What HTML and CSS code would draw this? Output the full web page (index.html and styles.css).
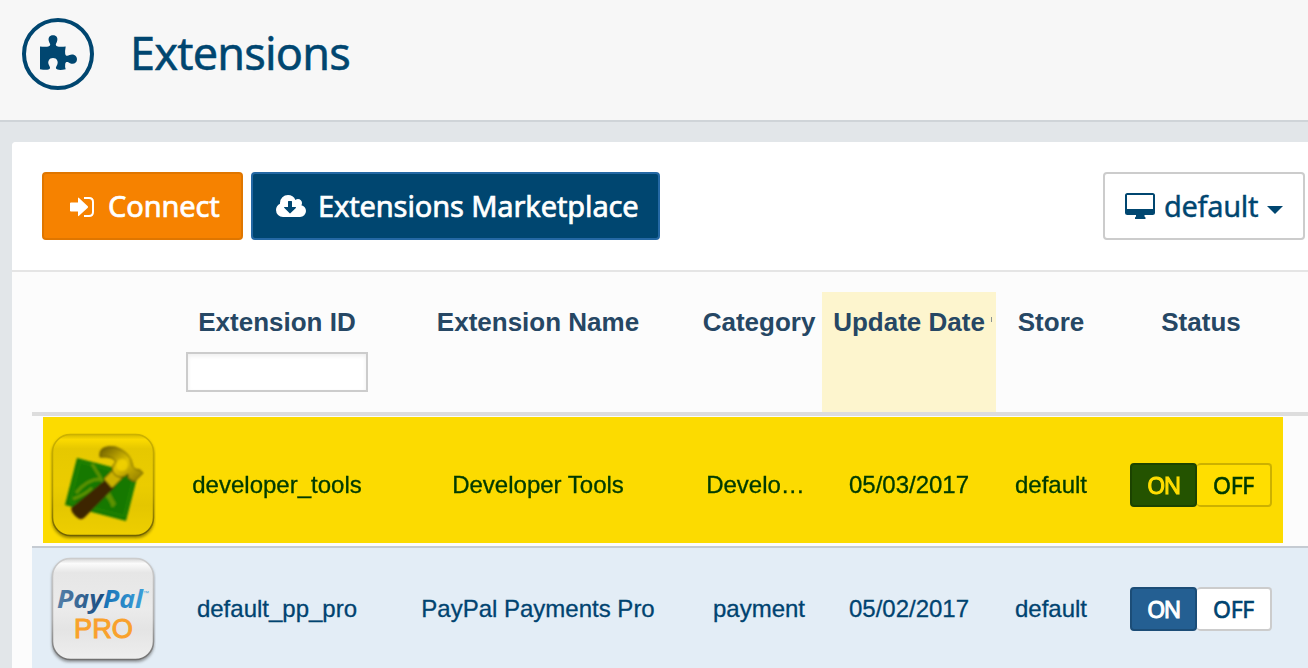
FILE: index.html
```html
<!DOCTYPE html>
<html lang="en">
<head>
<meta charset="utf-8">
<title>Extensions</title>
<link rel="stylesheet" href="styles.css">
</head>
<body>
<header class="page-header">
  <div class="page-icon">
    <svg width="38" height="36" viewBox="0 0 38 36"><path fill="currentColor" d="M0 11.500Q6 12.300 9 11.300C11.500 10.200 9.500 8.500 9 6.500C7.700 3 9.500 .3 13 .3S18.300 3 17 6.500C16.300 8.500 14.800 10.200 17 11.300Q20 12.300 25.700 11.500Q24.800 16 25.200 19C25.800 21.500 28 21 29.500 20C33 18.300 37 20.500 37 24.200S33.500 30 30 28.200C27.500 26.800 25.800 26.200 25.200 29Q24.800 31.500 25.700 34.300Q20 35.500 17.500 34.500C14.500 33.500 16.500 31.500 17.300 29.500C18.500 26.500 17 23 13 23S7.500 26.500 8.700 29.500C9.500 31.500 11.500 33.500 8.500 34.500Q6 35.300 0 34.300Z"/></svg>
  </div>
  <h1 class="page-title">Extensions</h1>
</header>
<main class="panel">
  <div class="toolbar">
    <a class="btn btn-connect">
      <svg class="ico-login" width="26" height="22" viewBox="0 0 26 22"><path fill="currentColor" d="M1 6.500H8V2.300Q8 1 9 2L17.800 10.300Q18.300 11 17.800 11.700L9 19.800Q8 20.700 8 19.500V15.500H1Q0 15.500 0 14.800V7.200Q0 6.500 1 6.500Z"/><path fill="none" stroke="currentColor" stroke-width="2" d="M14 2H19Q23 2 23 6V16Q23 20 19 20H14"/></svg>
      <span class="connect-text">Connect</span>
    </a>
    <a class="btn btn-market">
      <svg class="ico-cloud" width="30" height="22" viewBox="0 128 1920 1408"><path fill="currentColor" d="M1280 928q0-14-9-23t-23-9h-224v-352q0-13-9.500-22.500t-22.500-9.500h-192q-13 0-22.500 9.500t-9.500 22.500v352h-224q-13 0-22.500 9.500t-9.500 22.500q0 14 9 23l352 352q9 9 23 9t23-9l351-351q10-12 10-24zm640 224q0 159-112.500 271.500t-271.500 112.500h-1088q-185 0-316.500-131.500t-131.500-316.500q0-130 70-240t188-165q-2-30-2-43 0-212 150-362t362-150q156 0 285.500 87t188.500 231q71-62 166-62 106 0 181 75t75 181q0 76-41 138 130 31 213.500 135.500t83.500 238.500z"/></svg>
      <span class="market-text">Extensions Marketplace</span>
    </a>
    <a class="btn btn-store">
      <svg width="30" height="26" viewBox="0 0 30 26"><path fill="currentColor" fill-rule="evenodd" d="M2.500 0H27.500Q30 0 30 2.500V19.500Q30 22 27.500 22H19.500V23.500L20.500 24.500V26H10V24.500L11 23.500V22H2.500Q0 22 0 19.500V2.500Q0 0 2.500 0ZM2 2V16H28V2Z"/></svg>
      <span class="store-text">default</span>
      <i class="caret"></i>
    </a>
  </div>
  <div class="grid">
    <div class="row head">
      <div></div>
      <div class="cell"><span class="label">Extension ID</span><input class="filter" type="text" aria-label="Extension ID"></div>
      <div class="cell"><span class="label">Extension Name</span></div>
      <div class="cell"><span class="label">Category</span></div>
      <div class="cell sorted"><span class="label">Update Date</span><i class="sort-mark"></i></div>
      <div class="cell"><span class="label">Store</span></div>
      <div class="cell"><span class="label">Status</span></div>
    </div>
    <div class="row item picked">
      <div class="thumb">
        <svg width="110" height="114" viewBox="0 0 110 114">
          <defs>
            <linearGradient id="tile" x1="0" y1="0" x2="0" y2="1"><stop offset="0" stop-color="#d6d6d6"/><stop offset=".05" stop-color="#fbfbfb"/><stop offset=".14" stop-color="#e6e6e6"/><stop offset=".5" stop-color="#ebebeb"/><stop offset=".7" stop-color="#e4e4e4"/><stop offset="1" stop-color="#eee"/></linearGradient>
            <linearGradient id="edge" x1="0" y1="0" x2="0" y2="1"><stop offset="0" stop-color="#ccc"/><stop offset=".6" stop-color="#b0b0b0"/><stop offset="1" stop-color="#707070"/></linearGradient>
            <linearGradient id="steel" x1="0" y1="0" x2="1" y2="1"><stop offset="0" stop-color="#666"/><stop offset=".5" stop-color="#ddd"/><stop offset="1" stop-color="#888"/></linearGradient>
            <filter id="soft" x="-10%" y="-10%" width="120%" height="120%"><feGaussianBlur stdDeviation="1.500"/></filter>
            <filter id="smooth" x="-5%" y="-5%" width="110%" height="110%"><feGaussianBlur stdDeviation=".8"/></filter>
          </defs>
          <rect x="6" y="8" width="102" height="102" rx="18" fill="#555" opacity=".6" filter="url(#soft)"/>
          <rect x="6.500" y="6.500" width="101" height="101" rx="18" fill="url(#tile)" stroke="url(#edge)" stroke-width="1.500"/>
          <g filter="url(#smooth)">
          <path d="M31 30L92 46L80 93L19 77Z" fill="#148a4c"/>
          <path d="M34 34L88 48L78 88L24 74Z" fill="none" stroke="#26995b" stroke-width="1.500"/>
          <path d="M46 36Q54 48 60 60T69 77M30 65Q42 50 56 51M27 71Q40 66 46 60M60 67Q65 71 67 79" fill="none" stroke="#6fb080" stroke-width="3" opacity=".8"/>
          <path d="M60 51L69 59L38 90Q33 94 26 84L25 80Z" fill="#3c2c20"/>
          <path d="M58 51L70 39L79 47L66 60Z" fill="#ccc" stroke="#666"/>
          <path d="M54 29Q52 17 69 19Q84 24 86 36Q87 42 94 42L97 45L88 54L82 50V46Q75 52 69 47Q63 40 70 34Q68 28 54 29Z" fill="url(#steel)" stroke="#555" stroke-width="1"/>
          <circle cx="76" cy="37" r="6" fill="#f2f2f2" opacity=".8"/>
          </g>
        </svg>
      </div>
      <div class="cell">developer_tools</div>
      <div class="cell">Developer Tools</div>
      <div class="cell cat">Develo…</div>
      <div class="cell">05/03/2017</div>
      <div class="cell">default</div>
      <div class="cell"><div class="switch"><span class="on">ON</span><span class="off">OFF</span></div></div>
    </div>
    <div class="row item alt">
      <div class="thumb">
        <svg width="110" height="114" viewBox="0 0 110 114">
          <defs>
            <linearGradient id="pay" x1="0" x2="1"><stop offset="0" stop-color="#5680a8"/><stop offset="1" stop-color="#174b80"/></linearGradient>
            <linearGradient id="pal" x1="0" x2="1"><stop offset="0" stop-color="#1771b5"/><stop offset="1" stop-color="#3c9fd9"/></linearGradient>
          </defs>
          <rect x="6" y="8" width="102" height="102" rx="18" fill="#555" opacity=".6" filter="url(#soft)"/>
          <rect x="6.500" y="6.500" width="101" height="101" rx="18" fill="url(#tile)" stroke="url(#edge)" stroke-width="1.500"/>
          <text class="logo-name" x="11" y="56" fill="url(#pay)" textLength="46" lengthAdjust="spacingAndGlyphs">Pay</text>
          <text class="logo-name" x="57" y="56" fill="url(#pal)" textLength="40" lengthAdjust="spacingAndGlyphs">Pal</text>
          <text class="logo-tm" x="97" y="43">™</text>
          <text class="logo-pro" x="28" y="86" textLength="59" lengthAdjust="spacingAndGlyphs">PRO</text>
        </svg>
      </div>
      <div class="cell">default_pp_pro</div>
      <div class="cell">PayPal Payments Pro</div>
      <div class="cell">payment</div>
      <div class="cell">05/02/2017</div>
      <div class="cell">default</div>
      <div class="cell"><div class="switch"><span class="on">ON</span><span class="off">OFF</span></div></div>
    </div>
  </div>
</main>
</body>
</html>
```
FILE: styles.css
```css
* { box-sizing: border-box; }
body { margin: 0; width: 1308px; height: 668px; overflow: hidden; background: #e2e6e9; color: #004370; font-family: "Liberation Sans", Arial, sans-serif; }
svg { display: block; flex: none; }
.page-header { height: 122px; padding: 18px 22px; display: flex; gap: 36px; background: #f7f7f7; border-bottom: 2px solid #cfd4d8; }
.page-icon { width: 72px; height: 72px; border: 4px solid #004670; border-radius: 50%; padding: 13px 0 0 14px; color: #004670; }
.page-title { margin: 0; font: 400 45px/70px "Noto Sans", sans-serif; letter-spacing: -.8px; color: #004670; -webkit-text-stroke: .5px; }
.panel { margin: 20px 0 0 12px; background: #fcfcfc; border-top-left-radius: 4px; overflow: hidden; }
.toolbar { height: 130px; padding: 30px 3px 0 30px; display: flex; gap: 8px; background: #fff; border-bottom: 2px solid #e5e5e5; }
.btn { height: 68px; display: flex; align-items: center; border: 2px solid; border-radius: 4px; white-space: nowrap; font: 400 29px/64px "Noto Sans", sans-serif; }
.btn-connect { width: 201px; padding-left: 26px; gap: 12px; background: #f68200; border-color: #df7600; color: #fff; }
.ico-login { margin-top: 2px; }
.btn-market { width: 409px; padding-left: 23px; gap: 12px; background: #004670; border-color: #2468a4; color: #fff; }
.connect-text, .market-text { letter-spacing: -.12px; -webkit-text-stroke: .7px; }
.btn-store { width: 202px; margin-left: auto; padding-left: 20px; gap: 9px; background: #fff; border-color: #ccc; color: #004670; }
.store-text { letter-spacing: -.3px; -webkit-text-stroke: .4px; }
.caret { border: 8px solid transparent; border-top-color: #004670; border-bottom: 0; margin-top: 7px; }
.grid { margin-left: 20px; padding-top: 20px; }
.row { display: grid; grid-template-columns: 142px 206px 316px 126px 174px 110px 190px; }
.cell { display: flex; justify-content: center; align-items: center; white-space: nowrap; }
.head { height: 124px; border-bottom: 4px solid #ddd; color: #264764; font-weight: 700; font-size: 26px; }
.head .cell { flex-direction: column; justify-content: flex-start; }
.label { line-height: 60px; }
.filter { width: 182px; height: 40px; border: 2px solid #ccc; background: #fff; box-shadow: inset 0 2px 4px #0001; }
.sorted { position: relative; background: #fdf5ce; }
.sort-mark { position: absolute; left: 169px; top: 25px; width: 1px; height: 5px; background: #8a9290; }
.item { font-size: 24px; -webkit-text-stroke: .3px; }
.item svg { -webkit-text-stroke: 0; }
.picked { position: relative; isolation: isolate; height: 130px; background: #fcfcfc; }
.picked::after { content: ""; position: absolute; left: 11px; top: 1px; width: 1240px; height: 126px; background: #ffde00; mix-blend-mode: multiply; }
.picked .cell { height: 138px; }
.alt { height: 124px; background: #e3edf6; border-top: 2px solid #c5cbd2; }
.thumb { padding: 12px 0 0 14px; }
.alt .thumb { padding-top: 4px; }
.cat { padding-right: 7px; }
.switch { display: flex; width: 142px; height: 44px; font: 400 23px/40px "Noto Sans", sans-serif; text-align: center; letter-spacing: -.3px; }
.on { width: 67px; background: #245f92; border: 2px solid #1c4d77; border-radius: 4px; color: #fff; letter-spacing: -1.5px; -webkit-text-stroke: 1px; }
.off { width: 75px; background: #fff; border: 2px solid #ccc; border-left: 0; border-radius: 4px; -webkit-text-stroke: .6px; }
.logo-name { font: italic 700 25px "Open Sans", sans-serif; }
.logo-tm { font: 6px "Liberation Sans", sans-serif; fill: #3c9fd9; }
.logo-pro { font: 400 27px "Liberation Sans", sans-serif; fill: #f9a12b; stroke: #f9a12b; stroke-width: 1px; }
```
